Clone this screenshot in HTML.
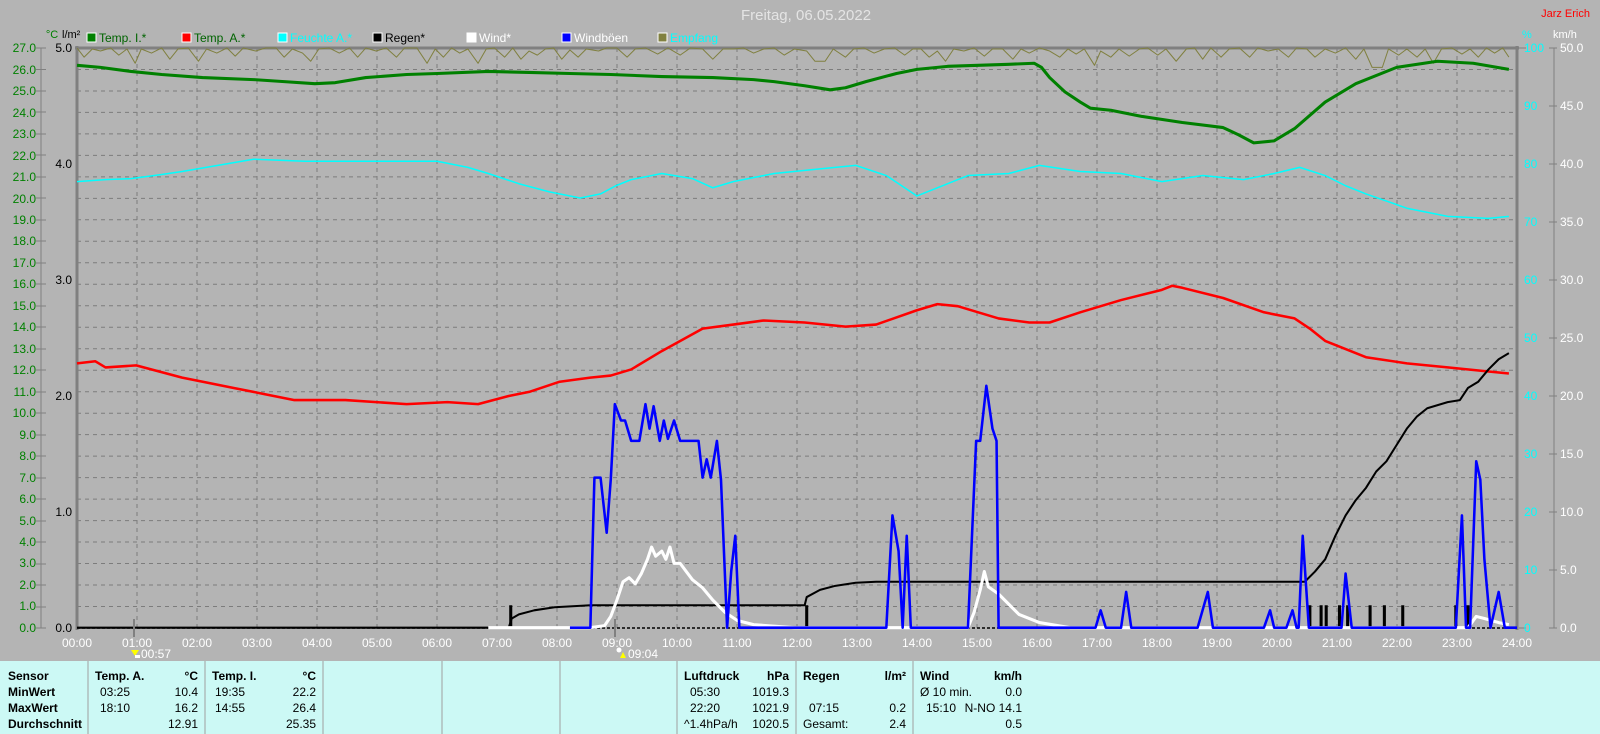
<!DOCTYPE html>
<html><head><meta charset="utf-8"><style>
body{margin:0;width:1600px;height:734px;overflow:hidden;background:#b4b4b4;font-family:"Liberation Sans",sans-serif}
svg{display:block}
</style></head><body>
<svg width="1600" height="734" viewBox="0 0 1600 734" font-family="Liberation Sans, sans-serif">
<rect width="1600" height="734" fill="#b4b4b4"/>
<text x="806" y="20" font-size="15" fill="#e4e4e4" text-anchor="middle">Freitag, 06.05.2022</text>
<text x="1590" y="17" font-size="11" fill="#ff0000" text-anchor="end">Jarz Erich</text>
<g font-size="12">
<rect x="87" y="33" width="9" height="9" fill="#008000" stroke="#fff"/><text x="99" y="42" fill="#006400">Temp. I.*</text>
<rect x="182" y="33" width="9" height="9" fill="#ff0000" stroke="#fff"/><text x="194" y="42" fill="#006400">Temp. A.*</text>
<rect x="278" y="33" width="9" height="9" fill="#00ffff" stroke="#fff"/><text x="290" y="42" fill="#00ffff">Feuchte A.*</text>
<rect x="373" y="33" width="9" height="9" fill="#000" stroke="#fff"/><text x="385" y="42" fill="#000">Regen*</text>
<rect x="467" y="33" width="9" height="9" fill="#fff" stroke="#fff"/><text x="479" y="42" fill="#fff">Wind*</text>
<rect x="562" y="33" width="9" height="9" fill="#0000ff" stroke="#fff"/><text x="574" y="42" fill="#fff">Windböen</text>
<rect x="658" y="33" width="9" height="9" fill="#808040" stroke="#fff"/><text x="670" y="42" fill="#00ffff">Empfang</text>
</g>
<text x="52" y="38" font-size="11" fill="#008000" text-anchor="middle">°C</text>
<text x="62" y="38" font-size="11" fill="#000">l/m²</text>
<text x="1522" y="38" font-size="11" fill="#00ffff">%</text>
<text x="1553" y="38" font-size="11" fill="#fff">km/h</text>
<g stroke="#7c7c7c" stroke-width="1" stroke-dasharray="4,4">
<path d="M77 69.5H1517M77 91H1517M77 112.4H1517M77 133.9H1517M77 155.4H1517M77 176.9H1517M77 198.4H1517M77 219.8H1517M77 241.3H1517M77 262.8H1517M77 284.3H1517M77 305.8H1517M77 327.2H1517M77 348.7H1517M77 370.2H1517M77 391.7H1517M77 413.2H1517M77 434.6H1517M77 456.1H1517M77 477.6H1517M77 499.1H1517M77 520.6H1517M77 542H1517M77 563.5H1517M77 585H1517M77 606.5H1517"/>
<path d="M137 48V628M197 48V628M257 48V628M317 48V628M377 48V628M437 48V628M497 48V628M557 48V628M617 48V628M677 48V628M737 48V628M797 48V628M857 48V628M917 48V628M977 48V628M1037 48V628M1097 48V628M1157 48V628M1217 48V628M1277 48V628M1337 48V628M1397 48V628M1457 48V628"/>
</g>
<g stroke="#808080" stroke-width="3" fill="none">
<path d="M75 48H1519M77 46V630M1517 46V630"/>
</g>
<path d="M77 628H1517" stroke="#000" stroke-width="1.5" stroke-dasharray="3,2"/>
<g stroke="#808080" stroke-width="1"><path d="M41 48V628"/><path d="M1554 48V628"/><path d="M1519 48H1526M1519 628H1526"/></g>
<g font-size="12" fill="#008000" text-anchor="end">
<text x="36" y="52">27.0</text><text x="36" y="74">26.0</text><text x="36" y="95">25.0</text><text x="36" y="117">24.0</text><text x="36" y="138">23.0</text><text x="36" y="160">22.0</text><text x="36" y="181">21.0</text><text x="36" y="203">20.0</text><text x="36" y="224">19.0</text><text x="36" y="245">18.0</text><text x="36" y="267">17.0</text><text x="36" y="288">16.0</text><text x="36" y="310">15.0</text><text x="36" y="331">14.0</text><text x="36" y="353">13.0</text><text x="36" y="374">12.0</text><text x="36" y="396">11.0</text><text x="36" y="417">10.0</text><text x="36" y="439">9.0</text><text x="36" y="460">8.0</text><text x="36" y="482">7.0</text><text x="36" y="503">6.0</text><text x="36" y="525">5.0</text><text x="36" y="546">4.0</text><text x="36" y="567">3.0</text><text x="36" y="589">2.0</text><text x="36" y="610">1.0</text><text x="36" y="632">0.0</text>
</g>
<g stroke="#808080"><path d="M36 48H46M36 69.5H46M36 91H46M36 112H46M36 134H46M36 155H46M36 177H46M36 198H46M36 220H46M36 241H46M36 263H46M36 284H46M36 306H46M36 327H46M36 349H46M36 370H46M36 392H46M36 413H46M36 435H46M36 456H46M36 478H46M36 499H46M36 521H46M36 542H46M36 564H46M36 585H46M36 607H46M36 628H46"/></g>
<g font-size="12" fill="#000" text-anchor="end">
<text x="72" y="52">5.0</text><text x="72" y="168">4.0</text><text x="72" y="284">3.0</text><text x="72" y="400">2.0</text><text x="72" y="516">1.0</text><text x="72" y="632">0.0</text>
</g>
<g font-size="12" fill="#00ffff">
<text x="1524" y="52">100</text><text x="1524" y="110">90</text><text x="1524" y="168">80</text><text x="1524" y="226">70</text><text x="1524" y="284">60</text><text x="1524" y="342">50</text><text x="1524" y="400">40</text><text x="1524" y="458">30</text><text x="1524" y="516">20</text><text x="1524" y="574">10</text><text x="1524" y="632">0</text>
</g>
<g stroke="#808080"><path d="M1549 48H1557M1549 106H1557M1549 164H1557M1549 222H1557M1549 280H1557M1549 338H1557M1549 396H1557M1549 454H1557M1549 512H1557M1549 570H1557M1549 628H1557"/></g>
<g font-size="12" fill="#fff">
<text x="1560" y="52">50.0</text><text x="1560" y="110">45.0</text><text x="1560" y="168">40.0</text><text x="1560" y="226">35.0</text><text x="1560" y="284">30.0</text><text x="1560" y="342">25.0</text><text x="1560" y="400">20.0</text><text x="1560" y="458">15.0</text><text x="1560" y="516">10.0</text><text x="1560" y="574">5.0</text><text x="1560" y="632">0.0</text>
</g>
<g transform="matrix(1.0206,0,0,1.0206,-1.6,0)" fill="none" stroke-linejoin="round">
<polyline stroke="#808040" stroke-width="1" points="77,47 84,56 92,48 100,50 110,47 118,54 126,48 134,62 140,48 150,52 160,47 168,58 176,48 186,47 196,60 204,48 214,52 224,47 232,55 240,47 252,50 262,47 272,47 280,56 288,48 298,52 306,60 314,48 324,47 334,52 344,47 352,56 360,47 370,50 380,47 390,56 398,47 410,47 420,62 428,48 436,56 444,47 452,52 460,48 470,62 478,48 486,47 496,56 504,47 512,58 520,50 528,54 536,48 544,47 552,58 560,49 568,56 576,48 588,50 596,47 606,47 616,56 624,48 634,47 646,53 656,47 668,54 678,47 690,48 700,58 710,48 720,48 730,47 740,52 750,48 760,47 770,54 780,48 792,50 800,60 810,60 818,48 830,56 838,48 848,47 858,52 868,48 878,47 888,54 896,48 904,48 912,56 920,50 928,60 936,48 946,50 956,47 966,55 974,48 984,48 994,58 1002,48 1010,52 1020,47 1030,50 1040,56 1048,48 1056,53 1064,48 1074,64 1080,50 1090,56 1098,48 1108,55 1118,48 1126,47 1136,54 1144,48 1154,60 1164,48 1172,47 1180,58 1188,47 1198,56 1206,48 1216,47 1226,56 1234,47 1244,50 1254,48 1264,56 1272,47 1282,48 1290,56 1300,48 1310,52 1320,47 1330,58 1338,48 1346,66 1356,66 1362,48 1372,54 1380,48 1390,56 1398,48 1406,62 1414,48 1424,47 1434,53 1442,48 1450,56 1458,47 1466,52 1474,47 1480,56"/>
<polyline stroke="#008000" stroke-width="3" points="77,64 100,66 130,70 160,73 200,76 250,78 280,80 310,82 330,81 360,76 400,73 430,72 480,70 520,71 560,72 600,73 650,75 700,76 740,78 760,80 790,84 815,88 830,86 850,80 880,72 900,68 930,65 960,64 990,63 1015,62 1022,66 1030,76 1045,90 1060,100 1070,106 1090,108 1120,114 1160,120 1200,125 1215,132 1230,140 1250,138 1270,126 1300,100 1330,82 1370,66 1410,60 1445,62 1480,68"/>
<polyline stroke="#00ffff" stroke-width="1.5" points="77,178 105,176 130,175 160,171 180,168 215,162 250,156 300,158 350,158 430,158 460,164 480,170 510,180 540,188 570,194 590,190 605,182 620,176 650,170 680,175 700,184 720,178 760,170 800,166 840,162 870,172 885,182 900,192 920,184 950,172 990,170 1020,162 1060,168 1100,170 1140,178 1180,172 1220,176 1250,170 1275,164 1300,172 1320,182 1340,190 1380,204 1420,212 1460,214 1480,212"/>
<polyline stroke="#ff0000" stroke-width="2.5" points="77,356 95,354 105,360 135,358 180,370 230,380 260,386 290,392 340,392 400,396 440,394 470,396 500,388 520,384 550,374 580,370 600,368 620,362 650,344 690,322 720,318 750,314 790,316 830,320 860,318 900,304 920,298 940,300 980,312 1010,316 1030,316 1060,306 1100,294 1140,284 1150,280 1160,282 1200,292 1240,306 1270,312 1285,322 1300,334 1340,350 1380,356 1420,360 1460,364 1480,366"/>
<polyline stroke="#000" stroke-width="2" points="77,615 500,615 503,606 510,602 525,598 545,595 580,593 790,593 792,585 805,578 820,574 840,571 860,570 1280,570 1290,560 1300,548 1310,525 1320,505 1330,490 1340,478 1350,462 1360,452 1370,436 1380,420 1390,408 1400,400 1420,394 1432,392 1440,380 1450,374 1460,362 1470,352 1480,346"/>
<g stroke="#000" stroke-width="3"><path d="M502 615V593M792 615V593M1285 615V593M1296 615V593M1301 615V593M1314 615V593M1322 615V593M1344 615V593M1358 615V593M1376 615V593M1428 615V593M1440 615V593"/></g>
<polyline stroke="#fff" stroke-width="3" points="480,615 580,615 594,613 600,604 606,588 612,570 618,566 624,572 630,562 636,548 640,536 644,545 650,540 654,548 658,536 662,552 668,552 674,560 680,568 690,576 700,588 712,600 724,608 740,612 780,615 950,615 956,600 962,578 966,560 970,575 980,582 1000,602 1020,610 1050,615 1440,615 1448,604 1456,606 1470,610 1480,612"/>
<polyline stroke="#0000ff" stroke-width="2.5" points="560,615 580,615 584,468 590,468 596,522 600,470 604,396 610,412 614,412 620,432 628,432 634,396 638,420 642,398 648,432 652,412 656,430 662,412 668,432 686,432 690,468 694,450 698,468 704,432 708,470 714,615 718,560 722,525 726,615 870,615 876,505 882,540 886,615 890,525 894,615 950,615 958,432 962,432 968,378 974,420 978,432 980,615 1075,615 1080,598 1085,615 1100,615 1105,580 1110,615 1175,615 1185,580 1190,615 1240,615 1246,598 1250,615 1262,615 1268,598 1272,615 1274,615 1278,525 1284,615 1316,615 1320,562 1326,615 1428,615 1434,505 1438,615 1442,615 1448,452 1452,470 1456,548 1462,615 1470,580 1476,615 1488,615"/>
</g>
<g stroke="#808080" stroke-width="2"><path d="M134 619V637M615 619V637"/></g>
<g font-size="12" fill="#fff" text-anchor="middle">
<text x="77" y="647">00:00</text><text x="137" y="647">01:00</text><text x="197" y="647">02:00</text><text x="257" y="647">03:00</text><text x="317" y="647">04:00</text><text x="377" y="647">05:00</text><text x="437" y="647">06:00</text><text x="497" y="647">07:00</text><text x="557" y="647">08:00</text><text x="617" y="647">09:00</text><text x="677" y="647">10:00</text><text x="737" y="647">11:00</text><text x="797" y="647">12:00</text><text x="857" y="647">13:00</text><text x="917" y="647">14:00</text><text x="977" y="647">15:00</text><text x="1037" y="647">16:00</text><text x="1097" y="647">17:00</text><text x="1157" y="647">18:00</text><text x="1217" y="647">19:00</text><text x="1277" y="647">20:00</text><text x="1337" y="647">21:00</text><text x="1397" y="647">22:00</text><text x="1457" y="647">23:00</text><text x="1517" y="647">24:00</text>
</g>
<g font-size="12" fill="#fff"><text x="141" y="658">00:57</text><text x="628" y="658">09:04</text></g>
<path d="M131 650l4 6 4-6z" fill="#ffff00"/><rect x="135" y="655" width="5" height="3" fill="#fff"/>
<circle cx="619" cy="650" r="2.5" fill="#fff"/><path d="M620 658l3-6 3 6z" fill="#ffff00"/>
<rect x="0" y="661" width="1600" height="73" fill="#ccf9f5"/>
<g stroke="#a0a0a0" stroke-width="1"><path d="M88 661V734M205 661V734M323 661V734M442 661V734M560 661V734M677 661V734M796 661V734M913 661V734"/></g>
<g font-size="12" fill="#000">
<g font-weight="bold"><text x="8" y="680">Sensor</text><text x="8" y="696">MinWert</text><text x="8" y="712">MaxWert</text><text x="8" y="728">Durchschnitt</text>
<text x="95" y="680">Temp. A.</text><text x="198" y="680" text-anchor="end">°C</text>
<text x="212" y="680">Temp. I.</text><text x="316" y="680" text-anchor="end">°C</text>
<text x="684" y="680">Luftdruck</text><text x="789" y="680" text-anchor="end">hPa</text>
<text x="803" y="680">Regen</text><text x="906" y="680" text-anchor="end">l/m²</text>
<text x="920" y="680">Wind</text><text x="1022" y="680" text-anchor="end">km/h</text></g>
<text x="100" y="696">03:25</text><text x="198" y="696" text-anchor="end">10.4</text>
<text x="100" y="712">18:10</text><text x="198" y="712" text-anchor="end">16.2</text>
<text x="198" y="728" text-anchor="end">12.91</text>
<text x="215" y="696">19:35</text><text x="316" y="696" text-anchor="end">22.2</text>
<text x="215" y="712">14:55</text><text x="316" y="712" text-anchor="end">26.4</text>
<text x="316" y="728" text-anchor="end">25.35</text>
<text x="690" y="696">05:30</text><text x="789" y="696" text-anchor="end">1019.3</text>
<text x="690" y="712">22:20</text><text x="789" y="712" text-anchor="end">1021.9</text>
<text x="684" y="728">^1.4hPa/h</text><text x="789" y="728" text-anchor="end">1020.5</text>
<text x="809" y="712">07:15</text><text x="906" y="712" text-anchor="end">0.2</text>
<text x="803" y="728">Gesamt:</text><text x="906" y="728" text-anchor="end">2.4</text>
<text x="920" y="696">Ø 10 min.</text><text x="1022" y="696" text-anchor="end">0.0</text>
<text x="926" y="712">15:10</text><text x="1022" y="712" text-anchor="end">N-NO 14.1</text>
<text x="1022" y="728" text-anchor="end">0.5</text>
</g>
</svg>
</body></html>
